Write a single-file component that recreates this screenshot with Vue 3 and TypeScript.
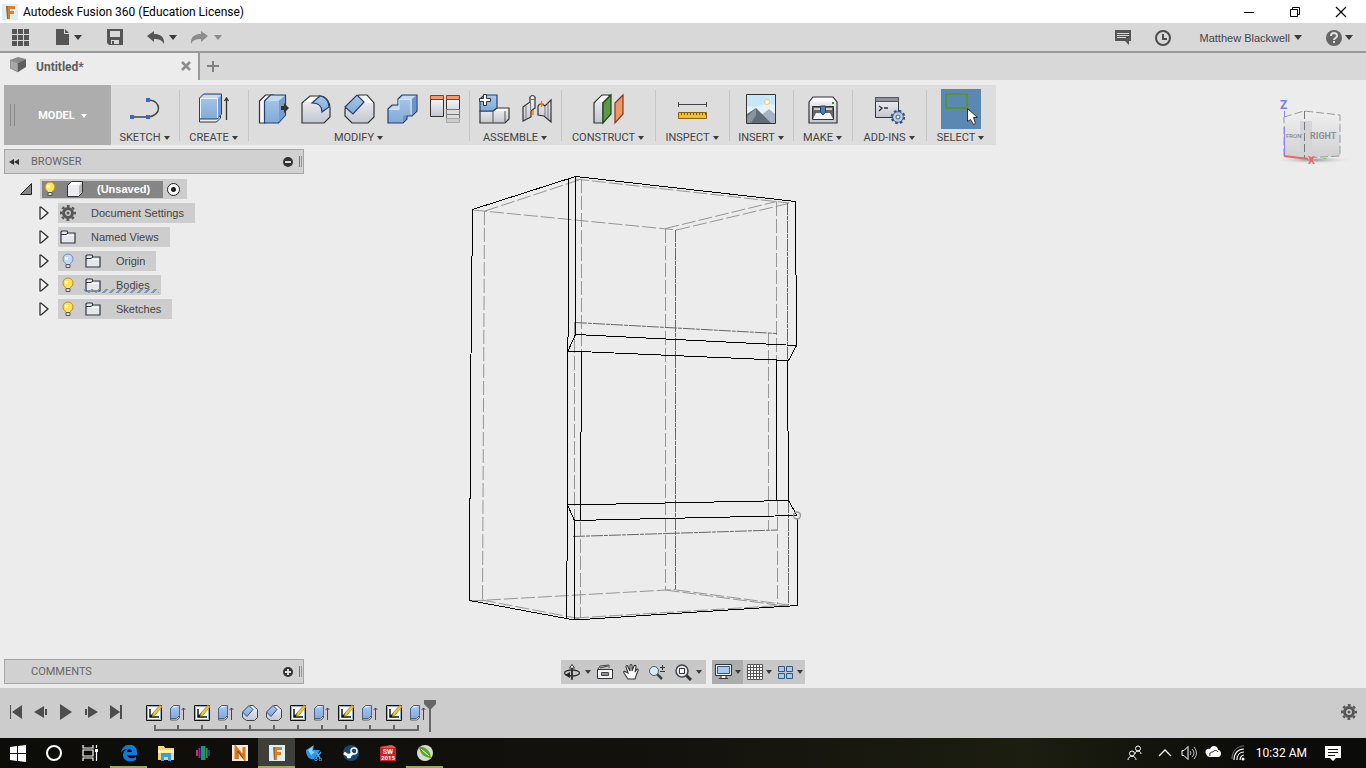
<script setup lang="ts">
import { ref } from 'vue'

interface RibbonGroup { label: string; width: number; icons: string[] }
interface TreeRow { label: string; icons: string[]; dotted?: boolean }

const glyphs: Record<string, string> = {
  // application bar
  apps: '<path fill="#555" d="M0 0h5v5H0zM6 0h5v5H6zM12 0h5v5h-5zM0 6h5v5H0zM6 6h5v5H6zM12 6h5v5h-5zM0 12h5v5H0zM6 12h5v5H6zM12 12h5v5h-5z"/>',
  file: '<path fill="#555" d="M1 0h8v5h5v11H1zM10 0l4 4h-4z"/>',
  save: '<path fill="#555" fill-rule="evenodd" d="M1 0h16v16H3l-2-2zM4 2v6h10V2zM5 11v4h8v-4z"/><path fill="#555" d="M6 12h2v3H6z"/>',
  undo: '<path fill="#555" d="M0 7l7-5v3c6 0 9 2 10 7v3c-2-4-5-5-10-5v3z"/>',
  redo: '<path fill="#8d8d8d" d="M17 7l-7-5v3C4 5 1 7 0 12v3c2-4 5-5 10-5v3z"/>',
  chat: '<path fill="#555" d="M1 1h16v11h-2v4l-4-4H1z"/><path stroke="#d8d8d8" d="M3 4.500h12M3 6.500h12M3 8.500h9"/>',
  clock: '<circle cx="9" cy="9" r="7" fill="none" stroke="#4d4d4d" stroke-width="2"/><path fill="none" stroke="#4d4d4d" stroke-width="2" d="M9 5v5h4"/>',
  help: '<circle cx="9" cy="9" r="8" fill="#666"/><path fill="none" stroke="#e0e0e0" stroke-width="2" d="M6 7c0-4 6-4 6 0 0 2-3 2-3 4"/><path fill="#e0e0e0" d="M8 12h2v2H8z"/>',
  doc: '<path fill="#8a8a8a" d="M0 3l8-3 8 2-7 4z"/><path fill="#a8a8a8" stroke="#777" stroke-width=".700" d="M0 3l8 3v9l-8-4z"/><path fill="#5d5d5d" d="M8 6l8-4v8l-8 5z"/>',
  // ribbon
  sketch: '<path fill="none" stroke="#444" stroke-width="1.500" d="M3 24h16c14-1 14-17 0-17"/><path fill="#3767c8" d="M1 22h4v4H1zM17 22h4v4h-4zM17 5h4v4h-4z"/>',
  create: '<path fill="#f1f1f3" stroke="#333" d="M1.500 24v5h17l4-4v-5"/><path fill="url(#blueFace)" stroke="#23406e" d="M1.500 5l4-4h18v20l-4 5h-18z"/><path fill="#c4dcf3" d="M3 5l3-3h16l-3 3z"/><path fill="#7b9cc9" d="M20 6l3-3v18l-3 4z"/><path stroke="#eaf3fc" fill="none" d="M2.500 25V5.500h17V25"/><path stroke="#333" fill="none" stroke-width="1.300" d="M28.500 27V5m-2 3l2-3 2 3"/>',
  presspull: '<path fill="#f5f5f7" stroke="#333" stroke-width="1.200" d="M2.500 8l6-6h7L8 8v22H2.500z"/><path fill="url(#blueFace)" stroke="#23406e" stroke-width="1.200" d="M7.500 8l6-6h15v20l-7 8h-14z"/><path fill="#c4dcf3" d="M9 8l5-5h13l-6 5z"/><path fill="#7b9cc9" d="M22 8l6-5v19l-6 7z"/><path fill="#333" d="M24 13h3v-3l5 5-5 5v-3h-3z"/>',
  fillet: '<path fill="url(#greyFace)" stroke="#333" stroke-width="1.200" d="M2 10l8-7h11c6 1 9 7 9 12v9l-6 6H2z"/><path fill="#fafafa" d="M4 9l7-5h5l-5 5z"/><path fill="url(#blueFace)" stroke="#23406e" stroke-width="1.200" d="M12 10l8-7c6 1 9 6 9 11l-7 5c0-6-3-9-10-9z"/>',
  chamfer: '<path fill="url(#greyFace)" stroke="#333" stroke-width="1.200" d="M2 16L16 2h8l7 8v14l-6 6H9l-7-7z"/><path fill="#fafafa" d="M21 3h3l6 7h-8l-3-3z"/><path fill="url(#blueFace)" stroke="#23406e" stroke-width="1.200" d="M2 14L14 2l7 7-11 12z"/>',
  combine: '<path fill="url(#blueFace)" stroke="#23406e" stroke-width="1.200" d="M2 16l4-4h6V6l4-4h15v16l-5 5h-5v3l-4 4H2z"/><path fill="#c4dcf3" d="M14 6l3-3h12l-3 3zM3 16l4-3h6v3z"/><path fill="none" stroke="#d7e8f8" d="M3 16.500h10v-10h12V21"/><path fill="#7092c2" d="M26 6l4-3v15l-4 4zM17 23l3-1v4l-3 3z"/>',
  replace: '<path fill="url(#greyFace)" stroke="#333" d="M1.500 6.500h13v17h-13zM17.500 6.500h13v10h-13z"/><path fill="#f49a72" stroke="#9c3517" d="M1.500 2.500h13v4h-13zM17.500 2.500h13v4h-13z"/><path fill="#ddd" stroke="#777" d="M17.500 16.500h13v5h-13zM17.500 21.500h13v4h-13z"/><path fill="#ccc" stroke="#aaa" d="M17.500 25.500h13v4h-13z"/>',
  component: '<path fill="url(#greyFace)" stroke="#333" stroke-width="1.200" d="M2 18h13l4-3h12v11l-4 4H2z"/><path fill="#fafafa" d="M16 18l3-2h11l-3 2z"/><path fill="none" stroke="#555" d="M15 18v12m12-12v11"/><path fill="url(#blueFace)" stroke="#23406e" stroke-width="1.200" d="M2 6l4-4h13v13l-4 3H2z"/><path fill="#fff" stroke="#333" d="M5.500 1.500h3v4h4v3h-4v4h-3v-4h-4v-3h4z"/>',
  joint: '<path fill="url(#greyFace)" stroke="#333" stroke-width="1.200" d="M2 14l7-5V5c0-3 5-3 5 0v10l-4 3v6l-8 4zM30 7l-6 6c-3-3-7-2-7 1v8l6 1 7 6z"/><path fill="none" stroke="#777" d="M5 13v13M9.500 9v8M24 13v10M27 10v16"/><path fill="#fff" stroke="#333" d="M9 5c0-3 5-3 5 0 0 2-5 2-5 0z"/><path stroke="#ff7300" stroke-width="1.400" d="M12 17v5M20.500 8v6m-2-3h4"/>',
  construct: '<path fill="url(#greyFace)" stroke="#333" stroke-width="1.200" d="M2 10l8-8h8l-7 7v21H2z"/><path fill="#fafafa" d="M4 9l6-6h7l-6 6z"/><path fill="#589b42" stroke="#21451a" stroke-width="1.200" d="M11 10l8-8v19l-8 9z"/><path fill="#ef9764" stroke="#84371b" stroke-width="1.200" d="M23 10l8-8v19l-8 9z"/>',
  inspect: '<path stroke="#444" fill="none" d="M2 11.500h28M2.500 9v5m28-5v5"/><path fill="#f1bd32" stroke="#89620c" d="M2.500 19.500h28v6h-28z"/><path stroke="#7c5a12" stroke-dasharray="1 2" stroke-width="2" d="M5 21h25"/>',
  insert: '<path fill="#c8e6fa" stroke="#333" d="M1.500 1.500h29v29h-29z"/><path fill="#e3f3fc" d="M2 13c9 3 18-4 28-1v18H2z"/><circle cx="22" cy="9" r="2.500" fill="#fffce0" stroke="#f4c66a"/><path fill="#a9b4c0" d="M15 23l9-7 6 5v9H12z"/><path fill="#626b78" d="M2 21l9-6 15 15H2z"/><path fill="#8b939d" d="M2 24l9-9v7l-5 8H2z"/>',
  make: '<path fill="url(#greyFace)" stroke="#333" stroke-width="1.200" d="M2 9l4-5h20l4 5v21H2z"/><path fill="#fafafa" d="M4 9l3-4h18l3 4z"/><path fill="#666" stroke="#333" d="M5.500 13.500h21v13h-21z"/><path fill="#d0d0d4" d="M7 15h18v2H7z"/><path fill="#f2f2f4" d="M9 20h14l3 6H6z"/><path fill="#4882bd" stroke="#23406e" d="M13.500 13h5v6l-2.500 3-2.500-3z"/><path fill="#26942a" d="M25 9h2v2h-2z"/>',
  addins: '<path fill="url(#greyFace)" stroke="#333" d="M2.500 4.500h23v20h-23z"/><path fill="#8f949c" stroke="#555" d="M2.500 4.500h23v4h-23z"/><path fill="none" stroke="#333" stroke-width="1.300" d="M6 13l3 2-3 3m5-3h4"/><circle cx="25" cy="24" r="5" fill="#b9cfe8" stroke="#38567e" stroke-width="1.300"/><circle cx="25" cy="24" r="6" fill="none" stroke="#38567e" stroke-width="2.600" stroke-dasharray="2.600 2.100"/><circle cx="25" cy="24" r="4.800" fill="#b9cfe8"/><circle cx="25" cy="24" r="2" fill="#fff" stroke="#38567e"/>',
  select: '<path fill="#5a88b3" d="M0 0h40v40H0z"/><path fill="none" stroke="#55980c" stroke-width="1.500" d="M5 5h21v14H5z"/><path fill="#fff" stroke="#333" d="M26.500 19.500v13l3-2 3 5 2-1-2-6h4z"/>',
  // browser tree
  bulbOn: '<circle cx="8" cy="6" r="5" fill="#ffe45c" stroke="#bd8b17"/><path fill="#fffbe0" d="M5 4h3v3H5z"/><path fill="#ffe45c" d="M6 9h4v3H6z"/><path fill="#ddd" stroke="#555" d="M6 11.500h4v3H6z"/>',
  bulbOff: '<circle cx="8" cy="6" r="5" fill="#bfd7fa" stroke="#728bb4"/><path fill="#f3f8ff" d="M5 4h3v3H5z"/><path fill="#c9daf5" d="M6 9h4v3H6z"/><path fill="#ddd" stroke="#555" d="M6 11.500h4v3H6z"/>',
  folder: '<path fill="#e5e7eb" stroke="#2f3540" stroke-width="1.200" d="M1 14V3l1-1h5l1 2h7v10z"/><path fill="none" stroke="#2f3540" d="M1 5.500h5l2-1.500"/><path stroke="#fff" d="M2 6.500h12"/>',
  body: '<path fill="#ececf0" stroke="#333" d="M.500 4.500l4-4h11v11l-4 4h-11z"/><path fill="#fff" d="M2 4l3-3h9l-3 3z"/><path fill="#b9bac0" d="M12 5l3-3v9l-3 3z"/>',
  gear: '<circle cx="8" cy="8" r="4.500" fill="#ccc" stroke="#555" stroke-width="3"/><circle cx="8" cy="8" r="7" fill="none" stroke="#555" stroke-width="2" stroke-dasharray="2.800 2.700" stroke-dashoffset="1.400"/><circle cx="8" cy="8" r="1.500" fill="#555"/>',
  // timeline
  tlSketch: '<path fill="#fff" stroke="#111" d="M.500.500h15v15H.500z"/><path fill="none" stroke="#8fb0d0" d="M1.500 1.500h13v13h-13z"/><path stroke="#111" stroke-width="1.500" fill="none" d="M4 4v8h9M4 12l4-4"/><path fill="#f8c31c" stroke="#9b6c14" stroke-width=".600" d="M7 8L14 0l2 2-7 8-3 1z"/>',
  tlExtrude: '<path fill="#eee" stroke="#555" d="M.500 12v3h6l3-2v-2"/><path fill="url(#blueFace)" stroke="#46658e" d="M.500 3.500l3-3h6v10l-3 3h-6z"/><path fill="#cfe1f5" d="M2 3l2-2h4L6 3z"/><path fill="none" stroke="#444" d="M13.500 15V3m-2 2l2-2 2 2"/>',
  tlChamfer: '<path fill="url(#greyFace)" stroke="#444" d="M.500 8L8 .500h3l4.500 4v8l-3 3h-8l-4-3z"/><path fill="url(#blueFace)" stroke="#2d4d7d" d="M.500 7L7 .500l4 4-6 7z"/>',
  first: '<path fill="#4d4d4d" d="M2 1h1v14H2zM14 1v14L4 8z"/>',
  back: '<path fill="#4d4d4d" d="M11 2v12L1 8zM12 5h2v6h-2z"/>',
  play: '<path fill="#4d4d4d" d="M2 0l12 8-12 8z"/>',
  forward: '<path fill="#4d4d4d" d="M5 2v12l10-6zM2 5h2v6H2z"/>',
  last: '<path fill="#4d4d4d" d="M12 1h2v14h-2zM2 1v14l10-7z"/>',
  // navigation bar
  orbit: '<ellipse cx="8" cy="9" rx="7.500" ry="3" fill="none" stroke="#333" stroke-width="1.300"/><path fill="#fff" stroke="#333" d="M7.500 15.500V4h-2l2.500-3.500L10.500 4h-2v11.500z"/><path fill="#222" d="M6 8v6l-5-3z"/>',
  lookat: '<path fill="#f4f4f6" stroke="#333" d="M.500 5.500h15v9H.500z"/><path fill="#8c9198" stroke="#444" d="M4.500 8.500h7v3h-7z"/><path fill="none" stroke="#444" d="M1 5l2-3 9-1v3M3 4l8-2"/>',
  pan: '<path fill="#fff" stroke="#333" stroke-width="1.100" d="M5 15L1 9c-1-2 1-2 2-1l2 1-2-6c0-2 2-2 2 0l2 4V2c0-2 2-2 2 0v5l2-5c1-1 2-1 2 1l-1 5 2-3c2 0 1 2 0 4l-2 6z"/>',
  zoom: '<path stroke="#444" stroke-width="2.500" d="M8 10l5 5"/><circle cx="5" cy="7" r="4.500" fill="#d8ebf4" stroke="#545d65"/><path stroke="#333" d="M11 3.500h5M13.500 1v5M11 7.500h5"/>',
  fit: '<path stroke="#333" stroke-width="3" d="M10 10l6 6"/><circle cx="7" cy="7" r="6" fill="#dfeaf2" stroke="#444" stroke-width="1.500"/><path fill="#fff" stroke="#333" d="M4.500 4.500h5v5h-5z"/>',
  display: '<path fill="#eee" stroke="#333" d="M.500 1.500h16v11H.500zM6 12.500h5v3H6zM4 15.500h9"/><path fill="#a6ccee" stroke="#35557d" d="M2.500 3.500h12v7h-12z"/>',
  grid: '<path fill="#fff" stroke="#555" d="M.500.500h15v15H.500zM3.500.500v15M6.500.500v15M9.500.500v15M12.500.500v15M.500 3.500h15M.500 6.500h15M.500 9.500h15M.500 12.500h15"/>',
  views: '<path fill="#aacbec" stroke="#355580" d="M.500 2.500h6v5h-6zM8.500 2.500h6v5h-6zM.500 9.500h6v5h-6zM8.500 9.500h6v5h-6z"/>',
  // desktop bar
  start: '<path fill="#fff" d="M0 2l7-1v7H0zM8 1l8-1v8H8zM0 9h7v7l-7-1zM8 9h8v8l-8-1z"/>',
  search: '<circle cx="8" cy="8" r="7" fill="none" stroke="#fff" stroke-width="2"/>',
  taskview: '<path fill="none" stroke="#fff" stroke-width="1.200" d="M1 0v3h10V0M1 5h10v6H1zM1 16v-3h10v3M14.500 0v3m0 3v10"/><path fill="#fff" d="M13 4h3v3h-3z"/>',
  edge: '<path fill="#0d7bd9" d="M0 8C1-3 16-3 16 7v3H6c1 4 6 4 9 2v3C9 18 2 16 2 10c0-3 2-5 4-6-3 0-5 2-6 4zm6-1h5c0-4-5-4-5 0z"/>',
  explorer: '<path fill="#f6d66f" d="M0 1h6l1 2h9v12H0z"/><path fill="#fff0ac" d="M0 5h16v3H0z"/><path fill="#3a9fe0" d="M3 8h10v8h-3v-4H6v4H3z"/>',
  audio: '<path stroke="#d02c87" stroke-width="2" d="M2 5v6"/><path stroke="#7c2f93" stroke-width="2" d="M4.500 3v10"/><path stroke="#128fa8" stroke-width="2" d="M7 1v14"/><path stroke="#209a4c" stroke-width="2.500" d="M9.200 1v14"/><path stroke="#3f8a38" stroke-width="2" d="M11.700 3v10"/><path stroke="#1c57b8" stroke-width="1.500" d="M14 5v6"/>',
  letterN: '<path fill="#fdebd8" d="M0 0h16v16H0z"/><path stroke="#d97819" stroke-width="3" fill="none" d="M4 14V3l8 10V2"/><path stroke="#88410c" fill="none" d="M6 14V6l5 7"/>',
  letterF: '<path fill="#d8f0fa" d="M0 0h16v16H0z"/><path fill="#e37d22" d="M5 2h8v3H8v2h4v3H8v5H5z"/><path fill="#b0601d" d="M4 2h2v13H5z"/>',
  bird: '<path fill="#2898e8" d="M0 5l8-5-1 5h7l-3 5-3 4c-5 1-8-3-8-9z"/><path fill="#8cd2ff" d="M2 5l5-4-1 5 3 1-4 3z"/><path stroke="#4f9fe8" stroke-width="1.400" fill="none" d="M10 7l4 6m1-6l-5 6"/><circle cx="10" cy="14.500" r="1.300" fill="none" stroke="#4f9fe8"/><circle cx="14.500" cy="14.500" r="1.300" fill="none" stroke="#4f9fe8"/>',
  steam: '<circle cx="8" cy="8" r="8" fill="#164876"/><circle cx="11" cy="6" r="3" fill="#164876" stroke="#fff" stroke-width="1.500"/><path stroke="#fff" stroke-width="3" d="M1 8l5 3 4-3"/><circle cx="6" cy="11" r="2.400" fill="#fff"/>',
  solid: '<path fill="#ca1f24" d="M0 2l12-2 4 3v13H0z"/><path fill="#ef5253" d="M0 2l12-2 4 3H3z"/><text x="8" y="9" text-anchor="middle" font-family="Roboto" font-size="7" font-weight="700" fill="#fff">SW</text><text x="8" y="15" text-anchor="middle" font-family="Roboto" font-size="6" font-weight="700" fill="#fff">2015</text>',
  corel: '<circle cx="8" cy="8" r="8" fill="#d6dad1"/><path fill="#58a91e" d="M2 2c6-1 11 3 12 11C8 13 3 9 2 2z"/><path stroke="#fff" d="M4 4l8 7"/>',
  people: '<circle cx="11" cy="3.500" r="2.500" fill="none" stroke="#fff"/><circle cx="5" cy="8.500" r="2.500" fill="none" stroke="#fff"/><path fill="none" stroke="#fff" d="M8 9c0-4 6-4 6 0M1 15c0-5 8-5 8 0"/>',
  chevron: '<path fill="none" stroke="#fff" stroke-width="1.300" d="M2 11l6-6 6 6"/>',
  volume: '<path fill="none" stroke="#fff" d="M1 5.500h2l4-4v13l-4-4H1z"/><path fill="none" stroke="#bbb" d="M9 6q2 2 0 4m2-6q4 4 0 8m2-10q5 6 0 12"/>',
  cloud: '<path fill="#fff" d="M1 9c-2-4 2-6 4-5 2-5 8-3 8 1 4 0 4 7 0 7H5c-2 0-3-1-4-3z"/><path fill="none" stroke="#15160f" d="M5 11c-1-4 2-4 3-4 1-2 4-2 5 0"/>',
  wifi: '<path fill="none" stroke="#fff" stroke-width="1.200" d="M3 15C3 8 7 4 13 4M6 15c0-5 3-8 7-8M9 15c0-3 2-5 4-5"/><path fill="none" stroke="#777" d="M1 14C1 6 6 1 13 1"/><circle cx="12" cy="14" r="1.500" fill="#fff"/>',
  note: '<path fill="#fff" d="M0 1h16v12h-5l-3 3-3-3H0z"/><path stroke="#111" d="M3 4.500h10M3 7.500h10M3 10.500h7"/>',
}

const groups: RibbonGroup[] = [
  { label: 'SKETCH', width: 69, icons: ['sketch'] },
  { label: 'CREATE', width: 69, icons: ['create'] },
  { label: 'MODIFY', width: 221, icons: ['presspull', 'fillet', 'chamfer', 'combine', 'replace'] },
  { label: 'ASSEMBLE', width: 92, icons: ['component', 'joint'] },
  { label: 'CONSTRUCT', width: 94, icons: ['construct'] },
  { label: 'INSPECT', width: 74, icons: ['inspect'] },
  { label: 'INSERT', width: 64, icons: ['insert'] },
  { label: 'MAKE', width: 59, icons: ['make'] },
  { label: 'ADD-INS', width: 74, icons: ['addins'] },
  { label: 'SELECT', width: 69, icons: ['select'] },
]

const rows: TreeRow[] = [
  { label: 'Document Settings', icons: ['gear'] },
  { label: 'Named Views', icons: ['folder'] },
  { label: 'Origin', icons: ['bulbOff', 'folder'] },
  { label: 'Bodies', icons: ['bulbOn', 'folder'], dotted: true },
  { label: 'Sketches', icons: ['bulbOn', 'folder'] },
]

const playback = ['first', 'back', 'play', 'forward', 'last']
const features = ['tlSketch', 'tlExtrude', 'tlSketch', 'tlExtrude', 'tlChamfer', 'tlChamfer', 'tlSketch', 'tlExtrude', 'tlSketch', 'tlExtrude', 'tlSketch', 'tlExtrude']
const system = ['start', 'search', 'taskview']
const apps = ['edge', 'explorer', 'audio', 'letterN', 'letterF', 'bird', 'steam', 'solid', 'corel']
const running = ['edge', 'letterF', 'corel']
const tray = ['people', 'chevron', 'volume', 'cloud', 'wifi']
const treeOpen = ref(true)
</script>

<template>
  <div class="app">
    <svg class="defs" aria-hidden="true">
      <defs>
        <linearGradient id="blueFace" x1="0" y1="0" x2="0" y2="1"><stop offset="0" stop-color="#a9c9ea" /><stop offset="1" stop-color="#82a9d8" /></linearGradient>
        <linearGradient id="greyFace" x1="0" y1="0" x2="0" y2="1"><stop offset="0" stop-color="#f4f4f6" /><stop offset="1" stop-color="#c3c6cf" /></linearGradient>
      </defs>
    </svg>

    <header class="titlebar">
      <svg class="i16" viewBox="0 0 16 16" v-html="glyphs.letterF"></svg>
      <h1>Autodesk Fusion 360 (Education License)</h1>
      <div class="window-buttons">
        <button aria-label="Minimize"><svg class="i12" viewBox="0 0 12 12"><path d="M1 6.500h10" stroke="#000" /></svg></button>
        <button aria-label="Restore"><svg class="i12" viewBox="0 0 12 12"><path d="M1.500 3.500h7v7h-7zM3.500 3.500v-2h7v7h-2" stroke="#000" fill="none" /></svg></button>
        <button aria-label="Close"><svg class="i12" viewBox="0 0 12 12"><path d="M1 1l10 10M11 1L1 11" stroke="#000" stroke-width="1.200" /></svg></button>
      </div>
    </header>

    <div class="appbar">
      <button class="grid-btn" aria-label="Data panel"><svg class="i18" viewBox="0 0 18 18" v-html="glyphs.apps"></svg></button>
      <button class="file-btn" aria-label="File"><svg class="i18" viewBox="0 0 18 18" v-html="glyphs.file"></svg><i class="caret"></i></button>
      <button class="save-btn" aria-label="Save"><svg class="i18" viewBox="0 0 18 18" v-html="glyphs.save"></svg></button>
      <button class="undo-btn" aria-label="Undo"><svg class="i18" viewBox="0 0 18 18" v-html="glyphs.undo"></svg><i class="caret"></i></button>
      <button class="redo-btn" aria-label="Redo"><svg class="i18" viewBox="0 0 18 18" v-html="glyphs.redo"></svg><i class="caret faded"></i></button>
      <div class="account">
        <button aria-label="Messages"><svg class="i18" viewBox="0 0 18 18" v-html="glyphs.chat"></svg></button>
        <button aria-label="Job status"><svg class="i18" viewBox="0 0 18 18" v-html="glyphs.clock"></svg></button>
        <button class="user">Matthew Blackwell<i class="caret"></i></button>
        <button aria-label="Help"><svg class="i18" viewBox="0 0 18 18" v-html="glyphs.help"></svg><i class="caret"></i></button>
      </div>
    </div>

    <div class="tabs">
      <div class="tab">
        <svg class="i16" viewBox="0 0 16 16" v-html="glyphs.doc"></svg>
        <span>Untitled*</span>
        <button aria-label="Close document"><svg class="i12" viewBox="0 0 12 12"><path d="M2 1l8 8M10 1l-8 8" stroke="#8c8c8c" stroke-width="2.500" /></svg></button>
      </div>
      <button class="new-tab" aria-label="New document"><svg class="i12" viewBox="0 0 12 12"><path d="M0 5h12M6 0v11" stroke="#808080" stroke-width="2" /></svg></button>
    </div>

    <main class="viewport">
      <svg class="model" viewBox="0 0 1366 608" aria-label="Cabinet wireframe">
        <g transform="translate(0 -80)" fill="none">
          <g class="hidden-edges">
            <path d="M484.500 211L482.500 600" />
            <path d="M485 211l97-32" />
            <path d="M473 210l204 20" />
            <path d="M575 179l214 24" />
            <path d="M665.500 228.500l111-27" />
            <path d="M676.500 230l112-26.500" />
            <path d="M581.500 179v172" />
            <path d="M665.500 229v361" />
            <path d="M776.500 202v159" />
            <path d="M574.500 322v214" />
            <path d="M768.500 333v197" />
            <path d="M580.500 505v113" />
            <path d="M777.500 500v104" />
            <path d="M470 601l206-11.500" />
            <path d="M665.500 590l112 15" />
            <path d="M676.500 590l112 15" />
            <path d="M482 600l99 19" />
            <path d="M575 618l214-13" />
          </g>
          <g class="hidden-edges dense">
            <path d="M675.500 230v360" />
            <path d="M787.500 203v157" />
            <path d="M788.500 501v104" />
            <path d="M575 322.500l202 11" />
            <path d="M573 536.500l204-6.500" />
          </g>
          <path class="edges" d="M472.500 209.500l103-33 220 25 1 144-8 15-220.500-9.500 7.500-16.500 221 11M472.500 209.500l-2 195-1 196 105 19.500 223-14.500-.5-90-223 5v99.500M568.500 178.500l-1 327-1 114M575.500 176.500v158M581.500 351l-1 169M776.500 360l.5 141M787.500 360l1 140.500-221 4.500 7 15.500M788.500 500.500l8.500 15" />
          <circle cx="797" cy="515.500" r="3.500" stroke="#999" stroke-width="1.400" />
        </g>
      </svg>

      <div class="top">
        <nav class="ribbon" aria-label="Toolbar">
          <button class="workspace"><span>MODEL</span><i class="caret small light"></i></button>
          <div v-for="g in groups" :key="g.label" class="group" :style="{ width: g.width + 'px' }">
            <div class="tools">
              <button v-for="i in g.icons" :key="i" :aria-label="i">
                <svg v-if="i === 'select'" class="i40" viewBox="0 0 40 40" v-html="glyphs[i]"></svg>
                <svg v-else class="i32" viewBox="0 0 32 32" v-html="glyphs[i]"></svg>
              </button>
            </div>
            <button class="group-label">{{ g.label }}<i class="caret small"></i></button>
          </div>
        </nav>
        <svg class="cube" viewBox="0 0 84 80" aria-label="View cube">
          <defs>
            <linearGradient id="cubeFace" x1="0" y1="0" x2="0" y2="1"><stop offset="0" stop-color="#f0f0f0" /><stop offset="1" stop-color="#d0d0d0" /></linearGradient>
            <radialGradient id="cubeShade"><stop offset="0" stop-color="#909090" /><stop offset="1" stop-color="#ececec" stop-opacity="0" /></radialGradient>
          </defs>
          <ellipse cx="43" cy="69" rx="40" ry="4" fill="url(#cubeShade)" />
          <path d="M14 26l20-6v47l-20-2zM34 20l36 4v41l-36 2z" fill="url(#cubeFace)" />
          <path d="M30 30h12v28H30z" fill="#d3d5d8" />
          <path d="M14 26l20-6 36 4v41l-36 2-20-2z" fill="none" stroke="#999" stroke-dasharray="8 3" />
          <path d="M34.500 20v47" fill="none" stroke="#777" stroke-dasharray="8 3" />
          <path d="M14.500 20v6M14.500 36v29" stroke="#8583f5" />
          <path d="M14 65l24 3" stroke="#ee6666" stroke-width="2" />
          <path d="M53 67.500h4" stroke="#74e074" />
          <g font-family="Roboto, sans-serif" font-weight="700">
            <text x="10" y="18" font-size="12" fill="#7d7bf3">Z</text>
            <text x="38" y="73" font-size="11" fill="#ee6666">X</text>
            <text x="16" y="47" font-size="6" font-weight="400" fill="#777">FRON'</text>
            <text x="40" y="48" font-size="9" fill="#8d9095">RIGHT</text>
          </g>
        </svg>
      </div>

      <section class="browser">
        <div class="panel-head">
          <svg class="collapse" viewBox="0 0 12 8"><path d="M1 4l5-3v6zM6 4l5-3v6z" fill="#333" /></svg>
          <h2>BROWSER</h2>
          <button aria-label="Collapse browser" @click="treeOpen = !treeOpen"><svg class="i12" viewBox="0 0 12 12"><circle cx="6" cy="6" r="5" fill="#333" /><path d="M3 6h6" stroke="#ddd" stroke-width="2" /></svg></button>
          <i class="grip"></i>
        </div>
        <ul v-if="treeOpen" class="tree">
          <li class="root">
            <svg class="i12" viewBox="0 0 12 12"><path d="M11.500.500v11H.500z" fill="#888" stroke="#222" /></svg>
            <div class="root-item">
              <button class="root-name">
                <svg class="i16" viewBox="0 0 16 16" v-html="glyphs.bulbOn"></svg>
                <svg class="i16" viewBox="0 0 16 16" v-html="glyphs.body"></svg>
                <span>(Unsaved)</span>
              </button>
              <input type="radio" checked aria-label="Activate component" />
            </div>
          </li>
          <li v-for="r in rows" :key="r.label">
            <svg class="expander" viewBox="0 0 10 14"><path d="M1 1v12h1l7-6-7-6z" fill="#f2f2f2" stroke="#222" stroke-width="1.200" /></svg>
            <button class="node">
              <svg v-for="i in r.icons" :key="i" class="i16" viewBox="0 0 16 16" v-html="glyphs[i]"></svg>
              <span>{{ r.label }}</span>
              <i v-if="r.dotted" class="hatch"></i>
            </button>
          </li>
        </ul>
      </section>

      <div class="bottom">
        <div class="panel-head comments">
          <h2>COMMENTS</h2>
          <button aria-label="Open comments"><svg class="i12" viewBox="0 0 12 12"><circle cx="6" cy="6" r="5" fill="#333" /><path d="M3 6h6M6 3v6" stroke="#ddd" stroke-width="2" /></svg></button>
          <i class="grip"></i>
        </div>
        <div class="navbar">
          <div class="nav-tools">
            <button class="orbit" aria-label="Orbit"><svg class="i18" viewBox="-1 -1 18 18" v-html="glyphs.orbit"></svg><i class="caret small"></i></button>
            <button aria-label="Look at"><svg class="i18" viewBox="-1 -1 18 18" v-html="glyphs.lookat"></svg></button>
            <button aria-label="Pan"><svg class="i18" viewBox="-1 -1 18 18" v-html="glyphs.pan"></svg></button>
            <button aria-label="Zoom"><svg class="i18" viewBox="-1 -1 18 18" v-html="glyphs.zoom"></svg></button>
            <button aria-label="Fit"><svg class="i18" viewBox="-1 -1 18 18" v-html="glyphs.fit"></svg><i class="caret small"></i></button>
          </div>
          <div class="display-tools">
            <button class="active" aria-label="Display settings"><svg class="i18" viewBox="0 0 18 18" v-html="glyphs.display"></svg><i class="caret small"></i></button>
            <button aria-label="Grid and snaps"><svg class="i18" viewBox="-1 -1 18 18" v-html="glyphs.grid"></svg><i class="caret small"></i></button>
            <button aria-label="Viewports"><svg class="i18" viewBox="-1 -1 18 18" v-html="glyphs.views"></svg><i class="caret small"></i></button>
          </div>
        </div>
      </div>
    </main>

    <section class="timeline" aria-label="Timeline">
      <div class="playback">
        <button v-for="p in playback" :key="p" :aria-label="p"><svg class="i16" viewBox="0 0 16 16" v-html="glyphs[p]"></svg></button>
      </div>
      <div class="track">
        <button v-for="(f, n) in features" :key="n" class="feature" :aria-label="f + ' ' + (n + 1)"><svg class="i18" viewBox="-1 -1 18 18" v-html="glyphs[f]"></svg><i class="rail"></i></button>
        <svg class="marker" viewBox="0 0 12 32"><path d="M0 0h12v4L7 9v23H5V9L0 4z" fill="#666" /></svg>
      </div>
      <button class="settings" aria-label="Timeline settings"><svg class="i16" viewBox="0 0 16 16" v-html="glyphs.gear"></svg></button>
    </section>

    <footer class="taskbar">
      <button v-for="s in system" :key="s" class="sys" :aria-label="s"><svg class="i18" viewBox="-1 -1 18 18" v-html="glyphs[s]"></svg></button>
      <div class="apps">
        <button v-for="a in apps" :key="a" :class="{ current: a === 'letterF', running: running.includes(a) }" :aria-label="a"><svg class="i16" viewBox="0 0 16 16" v-html="glyphs[a]"></svg></button>
      </div>
      <div class="tray">
        <button v-for="t in tray" :key="t" :class="t" :aria-label="t"><svg class="i16" viewBox="0 0 16 16" v-html="glyphs[t]"></svg></button>
        <time>10:32 AM</time>
        <button class="note" aria-label="Notifications"><svg class="i16" viewBox="0 0 16 16" v-html="glyphs.note"></svg></button>
      </div>
    </footer>
  </div>
</template>

<style>
body { margin: 0; background: #ececec; }
</style>

<style scoped>
.app { display: flex; flex-direction: column; min-height: 100vh; font: 11px/16px "Liberation Sans", Arial, sans-serif; color: #444; background: #ececec; }
.defs { position: absolute; width: 0; height: 0; }
button { display: flex; align-items: center; justify-content: center; padding: 0; border: 0; background: none; font: inherit; color: inherit; }
h1, h2 { margin: 0; font: inherit; }
svg { display: block; flex: none; }
.i12 { width: 12px; height: 12px; }
.i16 { width: 16px; height: 16px; }
.i18 { width: 18px; height: 18px; }
.i32 { width: 32px; height: 32px; }
.i40 { width: 40px; height: 40px; }
.caret { flex: none; width: 0; height: 0; border: 4px solid transparent; border-top: 5px solid #3c3c3c; border-bottom: 0; }
.caret.small { border-left-width: 3px; border-right-width: 3px; border-top-width: 4px; }
.caret.faded { border-top-color: #8a8a8a; }
.caret.light { border-top-color: #fff; }

.titlebar { display: flex; align-items: center; height: 23px; padding-left: 2px; background: #fff; color: #000; }
.titlebar h1 { margin-left: 5px; font: 12px/16px Roboto, sans-serif; }
.window-buttons { display: flex; margin-left: auto; padding-right: 2px; }
.window-buttons button { width: 46px; height: 20px; }

.appbar { display: flex; align-items: center; height: 28px; padding: 1px 13px 0 12px; box-sizing: border-box; min-height: 30px; background: #d8d8d8; border-bottom: 2px solid #999; }
.file-btn { margin-left: 25px; gap: 1px; }
.save-btn { margin-left: 24px; }
.undo-btn { margin-left: 23px; gap: 4px; }
.redo-btn { margin-left: 14px; gap: 5px; }
.account { display: flex; align-items: center; gap: 22px; margin-left: auto; }
.user { gap: 4px; margin: 0 1px 0 6px; }
.account button:last-child { gap: 2px; }

.tabs { display: flex; height: 27px; background: #d8d8d8; }
.tab { display: flex; align-items: center; width: 182px; padding: 0 6px 0 10px; background: #ececec; border-right: 2px solid #999; font: 700 12px/16px Roboto, sans-serif; color: #5c5c5c; }
.tab span { margin-left: 10px; }
.tab button { margin-left: auto; }
.tab .i16 { margin-bottom: 4px; }
.new-tab { margin-left: 7px; }

.viewport { position: relative; flex: 1; display: flex; flex-direction: column; padding: 5px 4px 4px; background: #ececec; }
.model { position: absolute; inset: 0; width: 100%; height: 100%; pointer-events: none; }
.edges { stroke: #000; shape-rendering: crispEdges; }
.hidden-edges { stroke: #969696; stroke-dasharray: 14 3; }
.dense { stroke: #666; stroke-dasharray: 12 1 4 1; }

.top { display: flex; justify-content: space-between; align-items: flex-start; height: 64px; }
.ribbon { display: flex; height: 60px; background: #ddd; }
.workspace { width: 107px; gap: 6px; padding: 2px 0 0 10px; background: linear-gradient(90deg, transparent 6px, #888 6px, #888 7px, transparent 7px, transparent 10px, #888 10px, #888 11px, transparent 11px) 0 50% / 100% 22px no-repeat #adadad; color: #fff; font: 700 11px/16px Roboto, sans-serif; }
.group { display: flex; flex-direction: column; position: relative; box-sizing: border-box; padding-right: 2px; }
.group:not(:last-child)::after { content: ""; position: absolute; right: 0; top: 5px; width: 1px; height: 51px; background: #c5c5c5; }
.tools { flex: none; display: flex; align-items: center; justify-content: center; gap: 11px; height: 46px; padding-top: 2px; box-sizing: border-box; }
.group-label { gap: 3px; height: 14px; font: 11px/14px Roboto, sans-serif; }
.cube { width: 84px; height: 80px; margin: 6px 8px 0 0; }

.browser { width: 300px; }
.panel-head { display: flex; align-items: center; box-sizing: border-box; height: 25px; padding-left: 3px; background: #d1d1d1; border: 1px solid #a6a6a6; color: #666; font: 11px/16px Roboto, sans-serif; }
.panel-head h2 { margin-left: 11px; }
.panel-head button { margin-left: auto; }
.collapse { width: 12px; height: 8px; }
.grip { width: 1px; height: 11px; margin: 0 1px 0 5px; border-left: 1px solid #777; border-right: 1px solid #999; }
.comments { width: 300px; }
.comments h2 { margin-left: 23px; }
.tree { margin: 5px 0 0; padding: 0; list-style: none; }
.tree li { display: flex; align-items: center; gap: 9px; height: 20px; margin-bottom: 4px; padding-left: 35px; }
.tree li.root { gap: 8px; padding-left: 16px; }
.root-item { display: flex; align-items: center; gap: 4px; height: 20px; padding: 0 7px 0 2px; background: #cdcdcd; }
.root-name { width: 121px; height: 17px; gap: 9px; justify-content: flex-start; background: #858585; color: #fff; font: 700 11px/16px "Liberation Sans", sans-serif; }
.root-name span { margin-left: 5px; }
.root-item input { appearance: none; width: 13px; height: 13px; margin: 0; border: 1px solid #222; border-radius: 50%; background: radial-gradient(circle, #222 2px, #fff 3px); }
.expander { width: 10px; height: 14px; }
.node { position: relative; height: 20px; gap: 9px; padding: 0 11px 0 2px; background: #cdcdcd; }
.node span { margin-left: 6px; }
.hatch { position: absolute; left: 26px; right: 2px; bottom: 2px; height: 4px; background: repeating-linear-gradient(135deg, #8294b8 0, #8294b8 2px, transparent 2px, transparent 5px); }

.bottom { display: grid; grid-template-columns: 1fr auto 1fr; align-items: center; margin-top: auto; }
.navbar { display: flex; gap: 6px; }
.nav-tools, .display-tools { display: flex; height: 24px; background: #c8c8c8; }
.nav-tools { box-sizing: border-box; gap: 8px; padding: 0 4px 0 2px; }
.nav-tools button { gap: 4px; }
.nav-tools .orbit { margin-right: -3px; }
.display-tools button { width: 31px; gap: 2px; }
.display-tools .active { background: #adadad; }

.timeline { display: flex; height: 50px; background: #ccc; }
.playback { display: flex; align-self: flex-start; gap: 9px; padding: 16px 0 0 8px; }
.track { display: flex; padding: 16px 0 0 18px; }
.feature { position: relative; flex-direction: column; justify-content: flex-start; width: 24px; height: 27px; }
.rail { position: absolute; left: 0; bottom: 0; width: 24px; height: 2px; background: #666; }
.rail::before { content: ""; position: absolute; left: 11px; bottom: 0; width: 2px; height: 6px; background: #666; }
.feature:first-child .rail { left: 12px; width: 12px; }
.feature:first-child .rail::before { left: 0; }
.feature:nth-child(12) .rail { width: 13px; }
.marker { width: 12px; height: 32px; margin: -4px 0 0 -6px; }
.settings { align-self: flex-start; margin: 16px 9px 0 auto; }

.taskbar { display: flex; height: 30px; background: linear-gradient(90deg, #0c0c09, #14120d 50%, #1c1e10 75%, #0b0c09 92%); color: #fff; }
.sys { width: 36px; }
.apps { display: flex; padding-left: 2px; }
.apps button { width: 37px; height: 30px; }
.apps .current { background: #3e3e3a; }
.apps .running { box-shadow: inset 0 -2px #98ae4d; }
.tray { display: flex; align-items: center; margin-left: auto; }
.tray .people { margin-right: 14px; }
.tray .chevron, .tray .volume { margin-right: 8px; }
.tray .cloud { margin-right: 10px; }
.tray time { margin-left: 9px; font: 12px/16px Roboto, sans-serif; }
.tray .note { margin: 0 25px 0 18px; }
</style>
